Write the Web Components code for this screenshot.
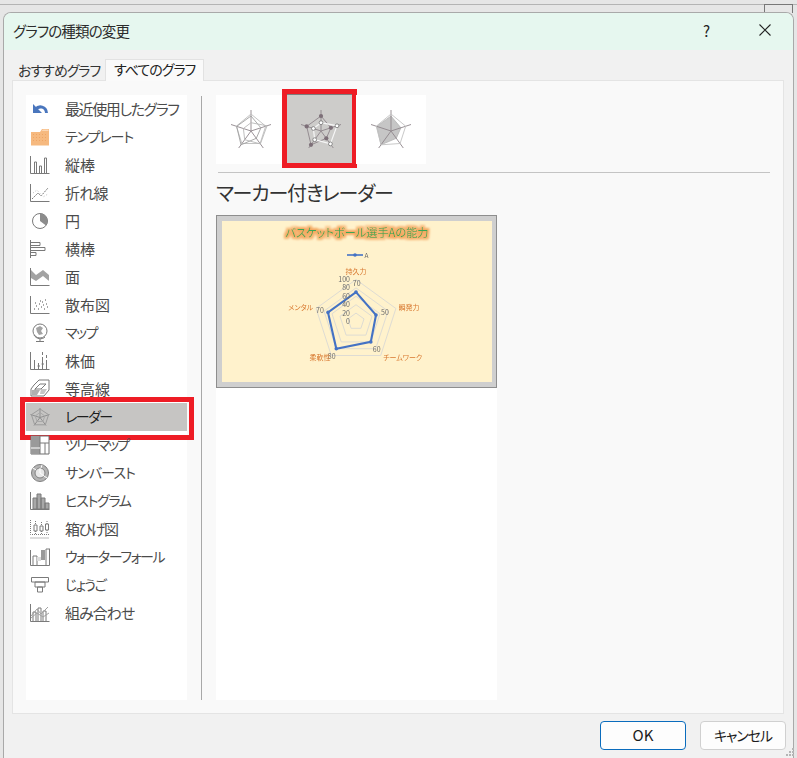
<!DOCTYPE html>
<html lang="ja">
<head>
<meta charset="utf-8">
<title>グラフの種類の変更</title>
<style>
	html, body { margin: 0; height: 100%; overflow: hidden; }
	body {
		background: linear-gradient(#e6e6e6 4px, #b4b4b4 4px, #b4b4b4 5px, #e6e6e6 5px);
		font-family: "Noto Sans CJK JP", "Noto Sans", sans-serif;
		font-feature-settings: "palt";
	}
</style>
</head>
<body>
<chart-dialog heading="グラフの種類の変更">
	<chart-nav slot="nav">
		<chart-nav-item icon="recent" style="letter-spacing:-1.4px">最近使用したグラフ</chart-nav-item>
		<chart-nav-item icon="template" style="font-size:14px;letter-spacing:-1.1px">テンプレート</chart-nav-item>
		<chart-nav-item icon="column">縦棒</chart-nav-item>
		<chart-nav-item icon="line" style="letter-spacing:-.7px">折れ線</chart-nav-item>
		<chart-nav-item icon="pie">円</chart-nav-item>
		<chart-nav-item icon="bar">横棒</chart-nav-item>
		<chart-nav-item icon="area">面</chart-nav-item>
		<chart-nav-item icon="scatter">散布図</chart-nav-item>
		<chart-nav-item icon="map" style="font-size:14px;letter-spacing:-1.5px">マップ</chart-nav-item>
		<chart-nav-item icon="stock">株価</chart-nav-item>
		<chart-nav-item icon="surface">等高線</chart-nav-item>
		<chart-nav-item icon="radar" selected style="font-size:14px;letter-spacing:-1.5px">レーダー</chart-nav-item>
		<chart-nav-item icon="treemap" style="font-size:14px;letter-spacing:-1.9px">ツリーマップ</chart-nav-item>
		<chart-nav-item icon="sunburst" style="font-size:14px;letter-spacing:-.9px">サンバースト</chart-nav-item>
		<chart-nav-item icon="histogram" style="font-size:14px;letter-spacing:-1.3px">ヒストグラム</chart-nav-item>
		<chart-nav-item icon="box" style="letter-spacing:-1.7px">箱ひげ図</chart-nav-item>
		<chart-nav-item icon="waterfall" style="font-size:14px;letter-spacing:-1.45px">ウォーターフォール</chart-nav-item>
		<chart-nav-item icon="funnel" style="font-size:14px;letter-spacing:-1.4px">じょうご</chart-nav-item>
		<chart-nav-item icon="combo" style="letter-spacing:-1px">組み合わせ</chart-nav-item>
	</chart-nav>
	<radar-thumb slot="thumbs" variant="plain"></radar-thumb>
	<radar-thumb slot="thumbs" variant="marker" selected></radar-thumb>
	<radar-thumb slot="thumbs" variant="filled"></radar-thumb>
	<span slot="subtitle">マーカー付きレーダー</span>
	<radar-preview slot="preview"></radar-preview>
	<dialog-button slot="buttons" default>OK</dialog-button>
	<dialog-button slot="buttons" style="font-size:14px;letter-spacing:-1.1px">キャンセル</dialog-button>
</chart-dialog>

<script>
(function() {
	// pentagon helpers, spoke 0 is at the top and goes clockwise
	function pt(cx, cy, r, i) {
		let a = (-90 + 72 * i) * Math.PI / 180;
		return [(cx + r * Math.cos(a)).toFixed(1), (cy + r * Math.sin(a)).toFixed(1)];
	}
	function poly(cx, cy, radii) {
		return radii.map((r, i) => pt(cx, cy, r, i).join(",")).join(" ");
	}

	let dialogTemplate = document.createElement("template");
	dialogTemplate.innerHTML = `
		<style>
		:host {
			display: block;
			height: 758px;
			padding: 12px 3px 0 3px;
			box-sizing: border-box;
			position: relative;
			color: #333;
		}
		.behind {
			position: absolute;
			left: 764px;
			top: 4px;
			width: 29px;
			height: 9px;
			border: 1px solid #777;
			border-bottom: 0;
			box-sizing: border-box;
		}
		.window {
			height: 100%;
			display: flex;
			flex-direction: column;
			background: #f1f1f1;
			border: 1px solid #a9a9a9;
			border-bottom: 0;
			border-radius: 8px 8px 0 0;
			box-sizing: border-box;
			position: relative;
		}
		.titlebar {
			height: 37px;
			flex: none;
			display: flex;
			align-items: center;
			background: #e6f7ef;
			border-radius: 7px 7px 0 0;
			padding-left: 9px;
			font-size: 14.5px;
			letter-spacing: -.85px;
			color: #2b2b2b;
		}
		.titlebar .text { flex: 1; margin-top: -3px; }
		.titlebar .help { width: 56px; font-size: 15px; color: #222; margin-top: -3px; }
		.titlebar .close { width: 34px; display: flex; margin-top: -3px; }
		.tabs {
			display: flex;
			align-items: flex-end;
			height: 30px;
			flex: none;
			padding-left: 9px;
			font-size: 14px;
			letter-spacing: -1px;
		}
		.tab { height: 18px; line-height: 17px; padding: 0 5px; width: 82px; white-space: nowrap; color: #333; }
		.tab.active {
			height: 21px;
			width: 89px;
			line-height: 19px;
			background: #fafafa;
			border: 1px solid #e2e2e2;
			border-bottom: 0;
			margin-bottom: -1px;
			position: relative;
			padding: 0 0 0 8px;
			color: #222;
			z-index: 1;
		}
		.panel {
			margin: 0 9px 0 8px;
			height: 634px;
			flex: none;
			box-sizing: border-box;
			background: #f9f9f9;
			border: 1px solid #e4e4e4;
			padding: 14px 13px 13px 13px;
			display: flex;
		}
		.nav { width: 161px; flex: none; background: #fff; }
		.divider { width: 1px; flex: none; background: #a8a8a8; margin: 1px 14px 0 14px; }
		.right { flex: 1; display: flex; flex-direction: column; min-width: 0; }
		.thumbs { display: flex; height: 69px; flex: none; }
		.rule { height: 1px; background: #c4c4c4; margin: 8px 0 0 2px; width: 552px; flex: none; }
		.subtitle { height: 42px; flex: none; font-size: 20px; line-height: 40px; letter-spacing: -1.2px; color: #333; }
		.preview { flex: 1; width: 281px; background: #fff; }
		.footer { flex: 1; display: flex; justify-content: flex-end; align-items: flex-start; gap: 14px; padding: 7px 7px 0 0; }
		.grip { position: absolute; right: 2px; bottom: 1px; }
		</style>
		<div class="behind"></div>
		<div class="window">
			<div class="titlebar">
				<span class="text" id="heading"></span>
				<span class="help">?</span>
				<span class="close">
					<svg width="12" height="12" viewBox="0 0 12 12"><path d="M.5 .5L11.5 11.5M11.5 .5L.5 11.5" stroke="#222" stroke-width="1.1" fill="none"/></svg>
				</span>
			</div>
			<div class="tabs">
				<span class="tab">おすすめグラフ</span>
				<span class="tab active">すべてのグラフ</span>
			</div>
			<div class="panel">
				<div class="nav"><slot name="nav"></slot></div>
				<div class="divider"></div>
				<div class="right">
					<div class="thumbs"><slot name="thumbs"></slot></div>
					<div class="rule"></div>
					<div class="subtitle"><slot name="subtitle"></slot></div>
					<div class="preview"><slot name="preview"></slot></div>
				</div>
			</div>
			<div class="footer"><slot name="buttons"></slot></div>
		</div>
		<svg class="grip" width="10" height="10" viewBox="0 0 10 10" fill="#b5b5b5">
			<rect x="7" y="1" width="2" height="2"/><rect x="4" y="4" width="2" height="2"/><rect x="7" y="4" width="2" height="2"/>
			<rect x="1" y="7" width="2" height="2"/><rect x="4" y="7" width="2" height="2"/><rect x="7" y="7" width="2" height="2"/>
		</svg>
	`;

	class ChartDialog extends HTMLElement {
		constructor() {
			super();
			this._shadowRoot = this.attachShadow({mode: "open"});
			this._shadowRoot.appendChild(dialogTemplate.content.cloneNode(true));
			this._shadowRoot.getElementById("heading").textContent = this.getAttribute("heading");
		}
	}

	let navTemplate = document.createElement("template");
	navTemplate.innerHTML = `
		<style>
		:host { display: block; }
		</style>
		<slot></slot>
	`;

	class ChartNav extends HTMLElement {
		constructor() {
			super();
			this._shadowRoot = this.attachShadow({mode: "open"});
			this._shadowRoot.appendChild(navTemplate.content.cloneNode(true));
		}
	}

	const L = `fill="none" stroke="#7a7a7a" stroke-width="1"`;
	const AXIS = `<path d="M0.5 1V18.5H19.5" ${L}/>`;
	const ICONS = {
		recent: `<path d="M16.5 14C16 7.5 9 6 5.5 10.5" fill="none" stroke="#4a76bd" stroke-width="3"/><path d="M3 5V14H12z" fill="#4a76bd"/>`,
		template: `<path d="M1 5H10L12 2H19V18.5H1z" fill="#f6b97f"/><path d="M11.5 4L13 2.5H18.5V4z" fill="#fbd7b4"/><path d="M3 7.5h14M3 10.5h14M3 13.5h14" stroke="#eea564" stroke-dasharray="1 2"/>`,
		column: AXIS + `<path d="M4.5 18V7H6.5V18M9.5 18V11H11.5V18M14.5 18V3H16.5V18" ${L}/>`,
		line: AXIS + `<path d="M2 16L8 10L11 13L18 5" ${L} stroke-dasharray="2 1"/><path d="M3 10L7 7L13 14L18 11" fill="none" stroke="#bbb" stroke-dasharray="1 2"/>`,
		pie: `<circle cx="10" cy="10" r="7.5" ${L} stroke-width="1.2"/><path d="M10 10V2.5A7.5 7.5 0 0 1 16 14.5z" fill="#8c8c8c"/>`,
		bar: `<path d="M0.5 1V19" ${L}/><path d="M1 3.5H10V6.5H1M1 8.5H15V11.5H1M1 13.5H6V16.5H1" ${L}/>`,
		area: AXIS + `<path d="M1 3L6 8L13 3L19 8V14L13 9L6 14L1 11z" fill="#a3a3a3"/><path d="M1 14L6 15L13 12L19 14V18H1z" fill="#fff"/>`,
		scatter: AXIS + `<path d="M4 14h1M6 11h1M8 14h1M9 9h1M11 12h1M12 7h1M13 10h1M15 5h1M16 9h1M17 12h1M14 14h1M10 6h1M5 8h1" stroke="#8a8a8a" stroke-width="1.6" stroke-dasharray="1 .4"/>`,
		map: `<circle cx="10" cy="8" r="7" ${L}/><path d="M6 5L10 3L13 5L11 8L13 11L9 12L7 9z" fill="#a3a3a3"/><path d="M15 14C12 17 6 16 4 12M10 16V18M6 18.5H14" ${L}/>`,
		stock: AXIS + `<path d="M4.5 9V18M8.5 12V18M12.5 6V18M16.5 9V18" ${L}/><path d="M11.5 13H14M7.5 15H10" stroke="#7a7a7a"/><path d="M12.5 1V4M16.5 4V7" ${L}/>`,
		surface: `<path d="M4 6L9 1H19V11L14 17H1V10z" ${L}/><path d="M5 10L10 5H16L11 10zM5 10V15" ${L}/><path d="M2 11H10L7 16H2z" fill="#b0b0b0"/><path d="M11 10H17L14 15H10z" fill="#c6c6c6"/>`,
		radar: `<path d="M10 1V10.5M.5 7.5L10 10.5M19.5 7.5L10 10.5M4 18.5L10 10.5M16 18.5L10 10.5" fill="none" stroke="#8f8f8f"/><polygon points="${poly(10,10.5,[8.5,9,9,9,9])}" fill="none" stroke="#9c9c9c"/><polygon points="${poly(10,10.5,[5,5,5,5,5])}" fill="none" stroke="#a8a8a8"/>`,
		treemap: `<path d="M1 1H19V19H1z" fill="#fff" stroke="#6f6f6f"/><path d="M1 1H10V19H1z" fill="#9a9a9a"/><path d="M10 1V19M10 8H19M15 8V19" ${L}/><path d="M1 13H10" stroke="#fff"/>`,
		sunburst: `<circle cx="10" cy="10" r="8.5" fill="#b4b4b4" stroke="#808080"/><circle cx="10" cy="10" r="5" fill="#e8e8e8" stroke="#808080"/><path d="M10 10V5M10 10L14 13M3 5L6 7M12 2L11 5M17 15L14 13" stroke="#fff" fill="none"/>`,
		histogram: `<path d="M0.5 1V18.5H19.5" ${L}/><path d="M3 18V7H7V18zM7 18V3H11V18zM11 18V7H15V18zM15 18V12H19V18z" fill="#a8a8a8" stroke="#7a7a7a"/>`,
		box: `<path d="M0.5 1V15.5H19M.5 19H19" ${L} stroke-dasharray="1 1"/><path d="M4 6H7V12H4zM10 7H13V12H10zM15.5 5H18.5V11H15.5z" ${L}/><path d="M5.5 2V6M5.5 12V15M11.5 3V7M11.5 12V15M17 2V5M17 11V15" ${L} stroke-dasharray="1 1"/>`,
		waterfall: `<path d="M0.5 3V18.5H19.5V1.5" ${L} stroke-width="1.2"/><path d="M3 18V9H7V18M16 18V2H19" ${L}/><path d="M7 10H11V14H7z" fill="#ddd"/><path d="M11 3H15V13H11z" fill="#9a9a9a"/>`,
		funnel: `<path d="M1.5 2.5H18.5V7H1.5zM5 7H15V12H5zM7.5 12H12.5V17H7.5z" fill="#fff" stroke="#7a7a7a"/>`,
		combo: AXIS + `<path d="M3 18V9H6V18M8 18V5H11V18M13 18V8H16V18" ${L}/><path d="M1 13L7 6L11 11L18 4M1 15L7 10L13 14L19 10" fill="none" stroke="#a0a0a0"/>`
	};

	let itemTemplate = document.createElement("template");
	itemTemplate.innerHTML = `
		<style>
		:host {
			display: flex;
			align-items: center;
			height: 28px;
			padding-left: 4px;
			font-size: 15px;
			color: #4b4b4b;
			position: relative;
			white-space: nowrap;
		}
		:host([selected]) { background: #c6c5c3; color: #1e1e1e; }
		svg { width: 20px; height: 20px; flex: none; margin-right: 15px; }
		.label { margin-top: -2px; }
		.mark {
			display: none;
			position: absolute;
			left: -6px;
			right: -7px;
			top: -6px;
			bottom: -9px;
			border: 5px solid #ee1c25;
			pointer-events: none;
		}
		:host([selected]) .mark { display: block; }
		</style>
		<svg viewBox="0 0 20 20" id="icon"></svg>
		<span class="label"><slot></slot></span>
		<div class="mark"></div>
	`;

	class ChartNavItem extends HTMLElement {
		constructor() {
			super();
			this._shadowRoot = this.attachShadow({mode: "open"});
			this._shadowRoot.appendChild(itemTemplate.content.cloneNode(true));
			this._shadowRoot.getElementById("icon").innerHTML = ICONS[this.getAttribute("icon")] || "";
		}
	}

	let thumbTemplate = document.createElement("template");
	thumbTemplate.innerHTML = `
		<style>
		:host {
			display: block;
			width: 70px;
			height: 69px;
			background: #fff;
			position: relative;
		}
		:host([selected]) {
			background: #cdccca;
		}
		:host([selected])::before {
			content: "";
			position: absolute;
			left: 0;
			right: 0;
			top: -1px;
			height: 1px;
			background: #7d7d7d;
		}
		svg { display: block; }
		.mark {
			display: none;
			position: absolute;
			left: -4px;
			right: -1px;
			top: -6px;
			bottom: -4px;
			border: 5px solid #ee1c25;
		}
		:host([selected]) .mark { display: block; }
		</style>
		<svg width="70" height="69" viewBox="0 0 70 69" id="art"></svg>
		<div class="mark"></div>
	`;

	class RadarThumb extends HTMLElement {
		constructor() {
			super();
			this._shadowRoot = this.attachShadow({mode: "open"});
			this._shadowRoot.appendChild(thumbTemplate.content.cloneNode(true));
			let cx = 35, cy = 36;
			let variant = this.getAttribute("variant");
			let dark = [15, 10.4, 9, 17, 15], light = [8.3, 16.8, 16, 10.8, 8];
			let html = "";
			if (variant == "filled") {
				html += `<polygon points="${poly(cx, cy, dark)}" fill="#c6c6c6" stroke="#b4b4b4" stroke-width=".8"/>`;
			}
			for (let i = 0; i < 5; i++) {
				let p = pt(cx, cy, 21, i);
				html += `<line x1="${cx}" y1="${cy}" x2="${p[0]}" y2="${p[1]}" stroke="#8f868b" stroke-width=".9"/>`;
			}
			if (variant == "filled") {
				html += `<polygon points="${poly(cx, cy, [17, 15.5, 15.5, 17, 15.5])}" fill="none" stroke="#c2c2c2" stroke-width=".9"/>`;
			} else if (variant == "plain") {
				html += `<polygon points="${poly(cx, cy, [17, 15.5, 15.5, 15.5, 15.5])}" fill="none" stroke="#bcbcbc" stroke-width=".9"/>`;
				html += `<polygon points="${poly(cx, cy, dark)}" fill="none" stroke="#a0a0a0" stroke-width=".9"/>`;
				html += `<polygon points="${poly(cx, cy, light)}" fill="none" stroke="#b8b8b8" stroke-width=".9"/>`;
			} else {
				html += `<polygon points="${poly(cx, cy, dark)}" fill="none" stroke="#8f868b" stroke-width=".9"/>`;
				html += `<polygon points="${poly(cx, cy, light)}" fill="none" stroke="#f6f6f6" stroke-width="1.2"/>`;
				dark.forEach((r, i) => {
					let p = pt(cx, cy, r, i);
					html += `<circle cx="${p[0]}" cy="${p[1]}" r="2.1" fill="#7d6f78"/>`;
				});
				light.forEach((r, i) => {
					let p = pt(cx, cy, r, i);
					html += `<circle cx="${p[0]}" cy="${p[1]}" r="1.9" fill="#fff" stroke="#666" stroke-width=".7"/>`;
				});
			}
			this._shadowRoot.getElementById("art").innerHTML = html;
		}
	}

	let previewTemplate = document.createElement("template");
	previewTemplate.innerHTML = `
		<style>
		:host { display: block; }
		.frame {
			width: 281px;
			height: 173px;
			box-sizing: border-box;
			border: 1px solid #8e8e8e;
			background: #cfcfcf;
			padding: 5px 4px 5px 5px;
		}
		svg { display: block; width: 270px; height: 161px; background: #fff2cc; font-family: "Noto Sans CJK JP", sans-serif; filter: blur(.25px); }
		text { font-feature-settings: "palt"; }
		</style>
		<div class="frame">
			<svg viewBox="0 0 270 161" id="chart"></svg>
		</div>
	`;

	class RadarPreview extends HTMLElement {
		constructor() {
			super();
			this._shadowRoot = this.attachShadow({mode: "open"});
			this._shadowRoot.appendChild(previewTemplate.content.cloneNode(true));
			let cx = 134, cy = 100.5, R = 42;
			let html = `<defs><filter id="glow" x="-10%" y="-50%" width="120%" height="200%">
				<feMorphology in="SourceAlpha" operator="dilate" radius="1.6" result="fat"/>
				<feGaussianBlur in="fat" stdDeviation="1" result="soft"/>
				<feFlood flood-color="#f4a860"/>
				<feComposite in2="soft" operator="in"/>
				<feMerge><feMergeNode/><feMergeNode in="SourceGraphic"/></feMerge>
			</filter></defs>`;
			html += `<text x="135" y="16" text-anchor="middle" font-size="11.2" fill="#3aa655" filter="url(#glow)">バスケットボール選手Aの能力</text>`;
			html += `<line x1="125" y1="34" x2="141" y2="34" stroke="#4472c4" stroke-width="1.6"/><circle cx="133" cy="34" r="1.8" fill="#4472c4"/>`;
			html += `<text x="142.5" y="36.5" font-size="6.5" fill="#666">A</text>`;
			for (let k = 1; k <= 5; k++) {
				html += `<polygon points="${poly(cx, cy, [1,1,1,1,1].map(() => R * k / 5))}" fill="none" stroke="#dedcd4" stroke-width="1"/>`;
			}
			let data = [70, 50, 60, 80, 70];
			html += `<polygon points="${poly(cx, cy, data.map(v => R * v / 100))}" fill="none" stroke="#4472c4" stroke-width="2.1"/>`;
			data.forEach((v, i) => {
				let p = pt(cx, cy, R * v / 100, i);
				html += `<circle cx="${p[0]}" cy="${p[1]}" r="1.8" fill="#4472c4"/>`;
			});
			// scale on the top spoke
			[0, 20, 40, 60, 80, 100].forEach((v, i) => {
				html += `<text x="128" y="${(103 - i * 8.48).toFixed(1)}" text-anchor="end" font-size="7" fill="#6b6b6b">${v}</text>`;
			});
			// value labels
			[[134.7, 64.5, "70"], [163, 94, "50"], [154.7, 131, "60"], [109.7, 138, "80"], [98, 92, "70"]].forEach(v => {
				html += `<text x="${v[0]}" y="${v[1]}" font-size="7" fill="#6b6b6b" text-anchor="middle">${v[2]}</text>`;
			});
			// category labels
			[[134, 53, "持久力"], [187, 89, "瞬発力"], [180.7, 139, "チームワーク"], [98, 139, "柔軟性"], [78.7, 89, "メンタル"]].forEach(v => {
				html += `<text x="${v[0]}" y="${v[1]}" font-size="7" fill="#d8782f" text-anchor="middle">${v[2]}</text>`;
			});
			this._shadowRoot.getElementById("chart").innerHTML = html;
		}
	}

	let buttonTemplate = document.createElement("template");
	buttonTemplate.innerHTML = `
		<style>
		:host {
			display: flex;
			align-items: center;
			justify-content: center;
			width: 86px;
			height: 29px;
			box-sizing: border-box;
			background: #fdfdfd;
			border: 1px solid #d0d0d0;
			border-radius: 4px;
			font-size: 15px;
			color: #1b1b1b;
			padding-bottom: 2px;
		}
		:host([default]) { border-color: #0a6cbd; }
		</style>
		<slot></slot>
	`;

	class DialogButton extends HTMLElement {
		constructor() {
			super();
			this._shadowRoot = this.attachShadow({mode: "open"});
			this._shadowRoot.appendChild(buttonTemplate.content.cloneNode(true));
		}
	}

	customElements.define("chart-dialog", ChartDialog);
	customElements.define("chart-nav", ChartNav);
	customElements.define("chart-nav-item", ChartNavItem);
	customElements.define("radar-thumb", RadarThumb);
	customElements.define("radar-preview", RadarPreview);
	customElements.define("dialog-button", DialogButton);
})();
</script>
</body>
</html>
